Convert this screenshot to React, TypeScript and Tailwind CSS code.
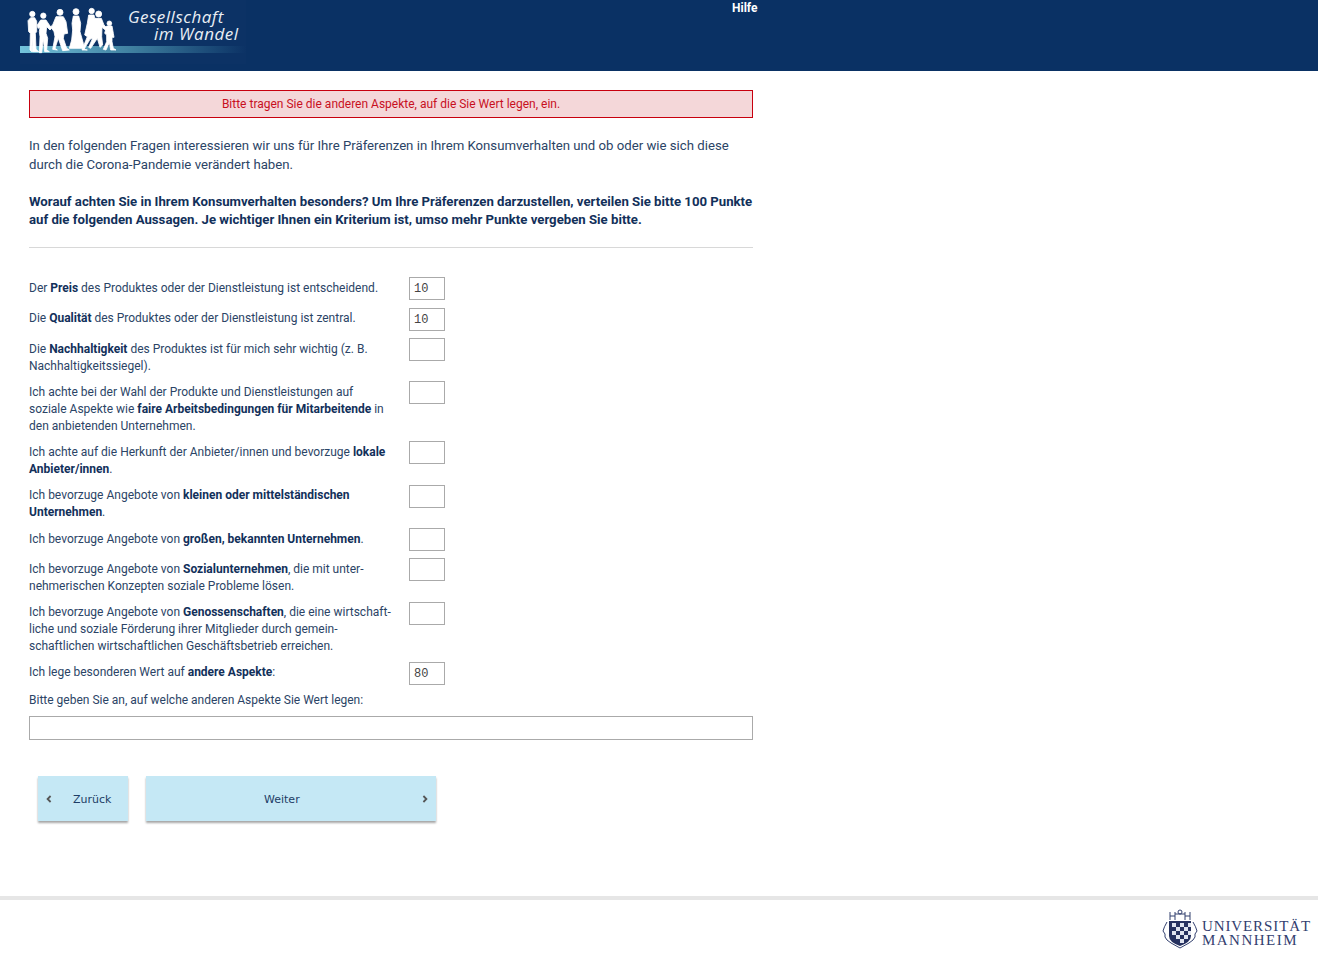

const rows: { id: number; value?: string; content: React.ReactNode }[] = [
  { id: 1, value: "10", content: <>Der <b>Preis</b> des Produktes oder der Dienstleistung ist entscheidend.</> },
  { id: 2, value: "10", content: <>Die <b>Qualität</b> des Produktes oder der Dienstleistung ist zentral.</> },
  { id: 3, content: <>Die <b>Nachhaltigkeit</b> des Produktes ist für mich sehr wichtig (z. B.<br />Nachhaltigkeitssiegel).</> },
  { id: 4, content: <>Ich achte bei der Wahl der Produkte und Dienstleistungen auf<br />soziale Aspekte wie <b>faire Arbeitsbedingungen für Mitarbeitende</b> in<br />den anbietenden Unternehmen.</> },
  { id: 5, content: <>Ich achte auf die Herkunft der Anbieter/innen und bevorzuge <b>lokale</b><br /><b>Anbieter/innen</b>.</> },
  { id: 6, content: <>Ich bevorzuge Angebote von <b>kleinen oder mittelständischen</b><br /><b>Unternehmen</b>.</> },
  { id: 7, content: <>Ich bevorzuge Angebote von <b>großen, bekannten Unternehmen</b>.</> },
  { id: 8, content: <>Ich bevorzuge Angebote von <b>Sozialunternehmen</b>, die mit unter-<br />nehmerischen Konzepten soziale Probleme lösen.</> },
  { id: 9, content: <>Ich bevorzuge Angebote von <b>Genossenschaften</b>, die eine wirtschaft-<br />liche und soziale Förderung ihrer Mitglieder durch gemein-<br />schaftlichen wirtschaftlichen Geschäftsbetrieb erreichen.</> },
  { id: 10, value: "80", content: <>Ich lege besonderen Wert auf <b>andere Aspekte</b>:</> },
];

function People() {
  return (
    <svg width="130" height="75" viewBox="0 0 390 225" className="absolute left-[-20px] top-0" fill="#fff" stroke="#fff" strokeWidth="2.5" strokeLinejoin="round">
      <circle cx="97" cy="42" r="8" />
      <path d="M84 62L92 53L104 53L110 64L110 95L106 100L108 148L116 155L97 155L97 110L95 155L90 150L91 100L86 95Z" />
      <circle cx="130" cy="47" r="8" />
      <path d="M112 75L122 60L138 60L146 72L155 85L150 90L140 80L138 100L143 115L140 150L148 155L134 155L130 118L125 158L118 158L120 110L118 95L120 82L114 85Z" />
      <circle cx="180" cy="37" r="9" />
      <path d="M158 75L168 50L190 50L198 65L203 100L192 102L190 115L200 145L208 150L188 152L175 115L165 145L172 150L158 148L165 110L162 95L152 80Z" />
      <circle cx="228" cy="35" r="9" />
      <path d="M220 48L236 48L242 70L240 95L250 130L252 145L208 145L215 120L218 90L216 70Z" />
      <circle cx="275" cy="33" r="8" />
      <path d="M266 45L282 45L288 70L286 100L283 112L270 118L252 148L262 150L246 150L262 110L254 105L262 70Z" />
      <circle cx="296" cy="42" r="9" />
      <path d="M285 55L304 55L312 75L322 85L316 90L306 82L305 110L308 135L300 142L292 115L272 145L266 142L280 110L282 80Z" />
      <circle cx="328" cy="70" r="7" />
      <path d="M320 78L336 78L340 100L342 112L336 112L336 125L340 145L348 150L332 150L328 128L318 150L310 148L320 125L320 105L314 100Z" />
    </svg>
  );
}

function Crest() {
  return (
    <svg width="38" height="42" viewBox="0 0 38 42" className="shrink-0">
      <g fill="none" stroke="#33406f" strokeWidth="1">
        <path d="M9 3v4h5V3M9 7v4M14 7v4M24 3v4h5V3M24 7v4M29 7v4M14 5h10" />
        <circle cx="19" cy="3" r="2" />
        <path d="M6 13q-3 5-4 9l2 3q-1 3 2 6l4 3 9 5 9-5 4-3q3-3 2-6l2-3q-1-4-4-9" />
      </g>
      <path d="M8 12h22v15q0 6-11 10Q8 33 8 27z" fill="#26315f" />
      <g fill="#dfe3ee">
        <rect x="11" y="14" width="4" height="4" />
        <rect x="19" y="14" width="4" height="4" />
        <rect x="27" y="14" width="3" height="4" />
        <rect x="15" y="18" width="4" height="4" />
        <rect x="23" y="18" width="4" height="4" />
        <rect x="11" y="22" width="4" height="4" />
        <rect x="19" y="22" width="4" height="4" />
        <rect x="27" y="22" width="3" height="4" />
        <rect x="15" y="26" width="4" height="4" />
        <rect x="23" y="26" width="4" height="4" />
        <rect x="19" y="30" width="4" height="4" />
      </g>
    </svg>
  );
}

function Chevron({ left }: { left?: boolean }) {
  return (
    <svg width="6" height="8" viewBox="0 0 6 8" fill="none" stroke="#555" strokeWidth="1.8">
      <path d={left ? "M4.6 1 1.6 4l3 3" : "M1.4 1l3 3-3 3"} />
    </svg>
  );
}

function NumberBox({ value }: { value?: string }) {
  return (
    <input
      readOnly
      value={value ?? ""}
      className="block w-[36px] h-[23px] mb-[7.5px] border border-[#aaaaaa] bg-white pl-[4px] pt-[1px] text-[12px] text-[#444] font-['Liberation_Mono',monospace] outline-none"
    />
  );
}

export default function App() {
  return (
    <div className="relative min-h-[955px] bg-white font-['Roboto',sans-serif] text-[#0b2a55] flex flex-col">
      <header className="h-[71px] bg-[#0a3164] flex items-start shrink-0">
        <div className="relative ml-[20px] w-[226px] h-[64px] bg-[#0c3265]">
          <div className="absolute left-0 top-[46px] h-[7px] w-[226px] bg-gradient-to-r from-[#74c4dc] via-[#3f7f9f] to-[#0c3265]" />
          <People />
          <div className="absolute left-[108px] top-[7.5px] text-[17px] leading-[17.5px] text-[#e9eef4] italic font-['Open_Sans',sans-serif] tracking-[0.5px] whitespace-nowrap">
            <div>Gesellschaft</div>
            <div className="ml-[26px]">im Wandel</div>
          </div>
        </div>
        <div className="ml-[486px] mt-[1px] text-[12px] leading-[15px] font-bold text-white">Hilfe</div>
      </header>

      <main className="ml-[29px] w-[724px] grow">
        <div className="mt-[19px] h-[28px] border border-[#c8000e] bg-[#f4d7d9] text-[#c8101e] text-[12px] flex items-center justify-center">
          Bitte tragen Sie die anderen Aspekte, auf die Sie Wert legen, ein.
        </div>
        <p className="mt-[18px] text-[13.2px] leading-[19px] text-[#2b4466] whitespace-nowrap">
          In den folgenden Fragen interessieren wir uns für Ihre Präferenzen in Ihrem Konsumverhalten und ob oder wie sich diese
          <br />
          durch die Corona-Pandemie verändert haben.
        </p>
        <p className="mt-[19px] text-[13.2px] leading-[18px] font-bold text-[#12305a] whitespace-nowrap">
          Worauf achten Sie in Ihrem Konsumverhalten besonders? Um Ihre Präferenzen darzustellen, verteilen Sie bitte 100 Punkte
          <br />
          auf die folgenden Aussagen. Je wichtiger Ihnen ein Kriterium ist, umso mehr Punkte vergeben Sie bitte.
        </p>
        <hr className="mt-[18px] border-0 h-px bg-[#d8d8d8]" />

        <div className="mt-[29px] text-[12px] leading-[16.7px] text-[#2b4466]">
          {rows.map((r) => (
            <div key={r.id} className="flex items-start [&_b]:text-[#12305a]">
              <div className="w-[380px] pt-[2.8px] pb-[7.1px] whitespace-nowrap">{r.content}</div>
              <NumberBox value={r.value} />
            </div>
          ))}
          <div className="pb-[7px]">Bitte geben Sie an, auf welche anderen Aspekte Sie Wert legen:</div>
          <input readOnly className="block w-[724px] h-[24px] border border-[#aaaaaa] bg-white outline-none" />
        </div>

        <div className="mt-[36px] ml-[9px] flex gap-[18px] text-[11px] font-['DejaVu_Sans',sans-serif] text-[#1d3d66]">
          <button className="relative w-[90px] h-[45px] bg-[#c5e8f5] shadow-[0_2px_2px_rgba(0,0,0,0.35)] flex items-center">
            <span className="absolute left-[8px] top-[19px] flex"><Chevron left /></span>
            <span className="ml-[35px] pt-[4px]">Zurück</span>
          </button>
          <button className="relative w-[290px] h-[45px] bg-[#c5e8f5] shadow-[0_2px_2px_rgba(0,0,0,0.35)] flex items-center">
            <span className="ml-[118px] pt-[4px]">Weiter</span>
            <span className="absolute right-[8px] top-[19px] flex"><Chevron /></span>
          </button>
        </div>
      </main>

      <footer className="h-[59px] shrink-0 border-t-[4px] border-[#e6e6e6] flex justify-end items-start pr-[7px]">
        <div className="mt-[9px] flex items-center gap-[3px]">
          <Crest />
          <div className="mt-[6px] text-[15px] leading-[14px] tracking-[0.9px] text-[#33406f] font-['Liberation_Serif',serif]">
            <div>UNIVERSITÄT</div>
            <div className="tracking-[1.5px]">MANNHEIM</div>
          </div>
        </div>
      </footer>
    </div>
  );
}
